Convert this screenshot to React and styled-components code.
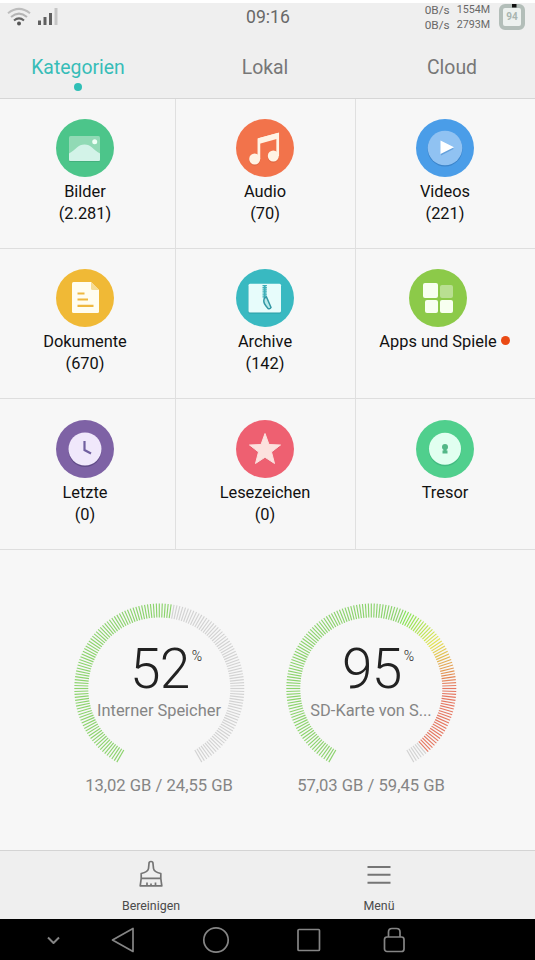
import React from "react";
import styled, { createGlobalStyle } from "styled-components";

const GlobalStyle = createGlobalStyle`
  * { box-sizing: border-box; }
  body { margin: 0; background: #f7f7f7; font-family: Roboto, "Liberation Sans", sans-serif; }
  svg { display: block; flex: none; }
`;

const Screen = styled.div`
  width: 535px;
  height: 960px;
  overflow: hidden;
  display: flex;
  flex-direction: column;
  background: #f7f7f7;
`;

const Header = styled.header`
  height: 99px;
  border-top: 3px solid #fff;
  border-bottom: 1px solid #d6d6d6;
  background: #efefef;
`;

const StatusBar = styled.div`
  height: 31px;
  display: grid;
  grid-template-columns: 208px 120px 1fr;
  color: #686868;
`;

const Signals = styled.div`
  display: flex;
  gap: 6px;
  padding: 4px 0 0 7px;
`;

const Clock = styled.time`
  font-size: 17.6px;
  line-height: 29px;
  text-align: center;
`;

const Meters = styled.div`
  display: flex;
  justify-content: flex-end;
  padding-right: 10px;
`;

const MeterColumn = styled.div`
  display: flex;
  flex-direction: column;
  font-size: ${(p) => p.$size}px;
  line-height: 14.5px;
  margin-right: ${(p) => p.$gap}px;
`;

const Tabs = styled.nav`
  height: 64px;
  display: grid;
  grid-template-columns: 156px 218px 156px;
`;

const Tab = styled.div`
  display: flex;
  flex-direction: column;
  align-items: center;
  font-size: 19.4px;
  line-height: 24px;
  padding-top: 22px;
  color: ${(p) => (p.$active ? "#37bdb8" : "#777")};
`;

const TabDot = styled.i`
  width: 8px;
  height: 8px;
  margin-top: 3px;
  border-radius: 50%;
  background: #2fbfb6;
`;

const CategoryGrid = styled.main`
  display: grid;
  grid-template-columns: 176px 180px 179px;
  grid-template-rows: 150px 150px 151px;
`;

const Category = styled.section`
  display: flex;
  flex-direction: column;
  align-items: center;
  padding: ${(p) => (p.$low ? 21 : 20)}px ${(p) => p.$inset}px 0 0;
  border-right: ${(p) => (p.$last ? "none" : "1px solid #e0e0e0")};
  border-bottom: 1px solid #dedede;
`;

const CategoryBody = styled.div`
  display: flex;
  flex-direction: column;
  align-items: center;
  margin-right: ${(p) => (p.$badge ? 14 : 0)}px;
`;

const CategoryLabel = styled.div`
  display: flex;
  align-items: center;
  position: relative;
  margin-top: 4px;
  font-size: 16.4px;
  line-height: 22px;
  color: #111;
  white-space: nowrap;
`;

const CategoryCount = styled(CategoryLabel)`
  margin-top: 0;
`;

const Badge = styled.i`
  position: absolute;
  left: calc(100% + 4px);
  top: 5px;
  width: 9px;
  height: 9px;
  border-radius: 50%;
  background: #ea4a14;
`;

const StorageArea = styled.section`
  flex: 1;
  display: flex;
  gap: 36px;
  padding: 52px 0 0 71px;
`;

const Storage = styled.div`
  width: 176px;
  display: flex;
  flex-direction: column;
  align-items: center;
`;

const Gauge = styled.div`
  display: grid;
  width: 176px;
  height: 172px;
  > * { grid-area: 1 / 1; }
`;

const GaugeText = styled.div`
  display: flex;
  flex-direction: column;
  align-items: center;
  padding-top: 37px;
`;

const Percent = styled.div`
  display: flex;
  align-items: flex-start;
  margin-left: 14px;
  font-size: 55px;
  line-height: 60px;
  font-weight: 300;
  letter-spacing: -0.7px;
  color: #222;
`;

const PercentSign = styled.span`
  margin: 7px 0 0 2px;
  font-size: 14px;
  line-height: 20px;
  letter-spacing: 0;
`;

const StorageName = styled.div`
  margin-top: 1px;
  font-size: 16.4px;
  line-height: 22px;
  color: #858585;
  white-space: nowrap;
`;

const StorageUsage = styled(StorageName)`
  font-size: 16.6px;
`;

const Footer = styled.footer`
  height: 69px;
  display: flex;
  padding-left: 37px;
  background: #efefef;
  border-top: 1px solid #d4d4d4;
`;

const Action = styled.div`
  width: 228px;
  display: flex;
  flex-direction: column;
  align-items: center;
  gap: 6px;
  padding-top: 9px;
  font-size: 12.4px;
  line-height: 20px;
  color: #4b4b4b;
`;

const SystemNav = styled.nav`
  height: 41px;
  background: #000;
  display: grid;
  grid-template-columns: 46px 93px 93px 94px 76px;
  justify-items: center;
  align-items: center;
  padding-left: 30px;
`;

const Wifi = () => (
  <svg width="25" height="20" viewBox="0 0 25 20" fill="none" strokeWidth="2">
    <path d="M1 6.3Q12 -2.5 23 6.3" stroke="#bdbdbd" />
    <path d="M4 10Q12 3.2 20 10" stroke="#b5b5b5" />
    <path d="M7 13.6Q12 9.2 17 13.6" stroke="#656565" />
    <circle cx="12" cy="16.5" r="2" fill="#555" />
  </svg>
);

const Signal = () => (
  <svg width="22" height="20" viewBox="0 0 22 20">
    <path d="M0 13.500h3v4.500H0z" fill="#606060" />
    <path d="M5.500 10h3v8h-3z" fill="#606060" />
    <path d="M11 6h3v12h-3z" fill="#606060" />
    <path d="M16.500 1h3v17h-3z" fill="#c6c6c6" />
  </svg>
);

const BatteryBox = styled.div`
  width: 26px;
  height: 26px;
  margin-top: 1px;
  display: grid;
  > * { grid-area: 1 / 1; }
`;

const BatteryValue = styled.span`
  font-size: 10px;
  font-weight: 700;
  line-height: 25px;
  text-align: center;
  color: #a9b5b0;
`;

const Battery = () => (
  <BatteryBox>
    <svg width="26" height="26" viewBox="0 0 26 26">
      <rect x="2" y="2" width="22" height="22" rx="4" fill="#edf1ef" stroke="#b3beb9" strokeWidth="4" />
      <path d="M13 0h4.500v3.500H13z" fill="#111" />
    </svg>
    <BatteryValue>94</BatteryValue>
  </BatteryBox>
);

const discs = {
  image: "#4cc58a",
  music: "#f2734b",
  video: "#4a9de8",
  document: "#f0b936",
  archive: "#39b9c1",
  apps: "#8cca49",
  recent: "#7e62a5",
  star: "#ee6071",
  safe: "#50cf8d",
};

const glyphs = {
  image: (
    <>
      <rect x="13" y="18" width="31" height="25" rx="1.500" fill="#40a877" opacity=".7" />
      <rect x="13" y="17" width="31" height="25" rx="1.500" fill="#91dab5" />
      <path d="M13 34.500C20 30.500 22 25.500 28.500 25.500S37 30.500 44 34.500V40.500Q44 42 42.500 42H14.500Q13 42 13 40.500Z" fill="#d3f3e8" />
      <circle cx="38.700" cy="22.700" r="2.500" fill="#eefff5" />
    </>
  ),
  music: (
    <g fill="none" stroke="#fff3e4">
      <g stroke="#d45e39" fill="#d45e39" opacity=".6" transform="translate(0 1.200)">
        <circle cx="18.700" cy="40" r="5.500" stroke="none" />
        <circle cx="37.300" cy="37" r="5.500" stroke="none" />
      </g>
      <path d="M22.900 40V20.500L41.700 15.300V37" strokeWidth="2.700" />
      <path d="M22.900 22L41.700 16.800" strokeWidth="5.500" />
      <circle cx="18.700" cy="40" r="5.500" fill="#fff3e4" stroke="none" />
      <circle cx="37.300" cy="37" r="5.500" fill="#fff3e4" stroke="none" />
    </g>
  ),
  video: (
    <>
      <circle cx="29" cy="30" r="17.500" fill="#3479bd" opacity=".7" />
      <circle cx="29" cy="29" r="17.300" fill="#90c2f2" />
      <path d="M25 23v13.500l13-6.800z" fill="#64a1dc" />
      <path d="M24.500 21.500v13.500L38 28.200z" fill="#fff" />
    </>
  ),
  document: (
    <>
      <path d="M17.500 13H35L43 21V42.500Q43 44 41.500 44H17.500Q16 44 16 42.500V14.500Q16 13 17.500 13Z" fill="#fffdf0" />
      <path d="M35 13V19.500Q35 21 36.500 21H43Z" fill="#f6dc93" />
      <path d="M21.500 24.500H28.500M21.500 30.500H32M21.500 36.800H37.500" stroke="#efb83e" strokeWidth="2.200" />
    </>
  ),
  archive: (
    <>
      <rect x="12.500" y="16" width="32.500" height="28.500" rx="1.500" fill="#289da5" />
      <rect x="12.500" y="14.700" width="32.500" height="28.800" rx="1.500" fill="#e7fcfb" />
      <path d="M28.700 16V29" stroke="#3daeb8" strokeWidth="4.400" strokeDasharray="1.300 .8" />
      <path d="M28.700 16V30" stroke="#3daeb8" strokeWidth="1.800" />
      <path d="M28.500 29Q26.500 33 30 37L32 39.500Q34 40.500 35 38.500L30.500 28Z" fill="#b8e9e8" stroke="#3297a4" strokeWidth="1.500" />
    </>
  ),
  apps: (
    <g fill="#f7fff0">
      <rect x="14" y="14" width="15" height="15" rx="2" />
      <rect x="31" y="16" width="13" height="13" rx="2" fill="#b9df91" />
      <rect x="16" y="31" width="13" height="13" rx="2" />
      <rect x="31" y="31" width="13" height="13" rx="2" />
    </g>
  ),
  recent: (
    <>
      <circle cx="29" cy="30.500" r="16.500" fill="#54417a" opacity=".7" />
      <circle cx="29" cy="29" r="16.500" fill="#f0e8fb" />
      <path d="M28.500 21V30L35 33.500" fill="none" stroke="#7160a0" strokeWidth="2.200" />
    </>
  ),
  star: (
    <>
      <path d="M29 16.500L32.500 26 44 26.500 35.500 32.500 38.500 44 29 38 19.500 44 22.500 32.500 14 26.500 25.500 26Z" fill="#bd4556" opacity=".6" />
      <path d="M29 13.500L33 24.500 44.500 25 35.500 32 38.500 43.500 29 37.300 19.500 43.500 22.500 32 13.500 25 25 24.500Z" fill="#fce1de" stroke="#fce1de" strokeWidth="1" strokeLinejoin="round" />
    </>
  ),
  safe: (
    <>
      <circle cx="29" cy="30" r="16.200" fill="#39ae79" opacity=".6" />
      <circle cx="29" cy="28.800" r="16" fill="#e1fff0" />
      <circle cx="29" cy="27" r="3" fill="#53b787" />
      <path d="M27.500 27H30.500V30.500H31.500V33.500H26.500V30.500H27.500Z" fill="#53b787" />
    </>
  ),
};

const CategoryIcon = ({ kind }) => (
  <svg width="58" height="58" viewBox="0 0 58 58">
    <circle cx="29" cy="29" r="29" fill={discs[kind]} />
    {glyphs[kind]}
  </svg>
);

const categories = [
  ["image", "Bilder", "(2.281)"],
  ["music", "Audio", "(70)"],
  ["video", "Videos", "(221)"],
  ["document", "Dokumente", "(670)"],
  ["archive", "Archive", "(142)"],
  ["apps", "Apps und Spiele", null],
  ["recent", "Letzte", "(0)"],
  ["star", "Lesezeichen", "(0)"],
  ["safe", "Tresor", null],
];

const TICKS = 150;

const tickColor = (i, used) => {
  const t = i / TICKS;
  if (t > used) return "#d2d2d2";
  if (t < 0.58) return "#8cd36d";
  const hue = Math.max(10, 102 - ((t - 0.58) / 0.22) * 92);
  return `hsl(${hue} 72% ${hue < 20 ? 64 : 61}%)`;
};

const Dial = ({ used }) => (
  <svg width="176" height="172" viewBox="0 0 176 172">
    {Array.from({ length: TICKS + 1 }, (_, i) => (
      <path
        key={i}
        d="M88.300 157.500V171.500"
        stroke={tickColor(i, used)}
        strokeWidth="1.150"
        transform={`rotate(${30 + (i * 300) / TICKS} 88.300 86.500)`}
      />
    ))}
  </svg>
);

const storages = [
  { value: "52", used: 0.53, name: "Interner Speicher", usage: "13,02 GB / 24,55 GB" },
  { value: "95", used: 0.96, name: "SD-Karte von S...", usage: "57,03 GB / 59,45 GB" },
];

const Brush = () => (
  <svg width="26" height="30" viewBox="0 0 26 30" fill="none" stroke="#757575" strokeWidth="1.700" strokeLinejoin="round">
    <path d="M11 3.500Q11 1.500 13 1.500T15 3.500L15.500 8.500Q16 12 22.800 13.500V18.500L23.800 25.800H2.200L3.200 18.500V13.500Q10 12 10.500 8.500ZM3.200 18.300H22.800M9 25.500V22.500M13 25.500V23.500M17.500 25.500V22.500" />
  </svg>
);

const MenuLines = () => (
  <svg width="26" height="30" viewBox="0 0 26 30" stroke="#757575" strokeWidth="1.900">
    <path d="M1.500 7H24.500M1.500 14.800H24.500M1.500 22.700H24.500" />
  </svg>
);

const NavIcon = ({ children }) => (
  <svg width="30" height="30" viewBox="0 0 30 30" fill="none" stroke="#858585" strokeWidth="1.700" strokeLinejoin="round">
    {children}
  </svg>
);

export default function App() {
  return (
    <Screen>
      <GlobalStyle />
      <Header>
        <StatusBar>
          <Signals><Wifi /><Signal /></Signals>
          <Clock>09:16</Clock>
          <Meters>
            <MeterColumn $size={11.8} $gap={7}><span>0B/s</span><span>0B/s</span></MeterColumn>
            <MeterColumn $size={10.7} $gap={9}><span>1554M</span><span>2793M</span></MeterColumn>
            <Battery />
          </Meters>
        </StatusBar>
        <Tabs>
          <Tab $active>Kategorien<TabDot /></Tab>
          <Tab>Lokal</Tab>
          <Tab>Cloud</Tab>
        </Tabs>
      </Header>
      <CategoryGrid>
        {categories.map(([kind, label, count], i) => (
          <Category key={kind} $low={i > 5} $last={i % 3 === 2} $inset={i % 3 === 0 ? 5 : 1}>
            <CategoryBody $badge={kind === "apps"}>
              <CategoryIcon kind={kind} />
              <CategoryLabel>{label}{kind === "apps" && <Badge />}</CategoryLabel>
              {count && <CategoryCount>{count}</CategoryCount>}
            </CategoryBody>
          </Category>
        ))}
      </CategoryGrid>
      <StorageArea>
        {storages.map((s) => (
          <Storage key={s.value}>
            <Gauge>
              <Dial used={s.used} />
              <GaugeText>
                <Percent>{s.value}<PercentSign>%</PercentSign></Percent>
                <StorageName>{s.name}</StorageName>
              </GaugeText>
            </Gauge>
            <StorageUsage>{s.usage}</StorageUsage>
          </Storage>
        ))}
      </StorageArea>
      <Footer>
        <Action><Brush />Bereinigen</Action>
        <Action><MenuLines />Menü</Action>
      </Footer>
      <SystemNav>
        <NavIcon><path d="M10 12.500L15.500 18L21 12.500" strokeWidth="2" /></NavIcon>
        <NavIcon><path d="M4.500 15L25 3.500V26.500Z" /></NavIcon>
        <NavIcon><circle cx="15" cy="15" r="12.200" /></NavIcon>
        <NavIcon><rect x="4" y="4.500" width="21.500" height="21" rx="1" /></NavIcon>
        <NavIcon>
          <rect x="5.500" y="12" width="19.500" height="14.500" rx="2.500" />
          <path d="M9.500 12V7Q9.500 3.500 13 3.500H17.500Q21 3.500 21 7V12" />
        </NavIcon>
      </SystemNav>
    </Screen>
  );
}
